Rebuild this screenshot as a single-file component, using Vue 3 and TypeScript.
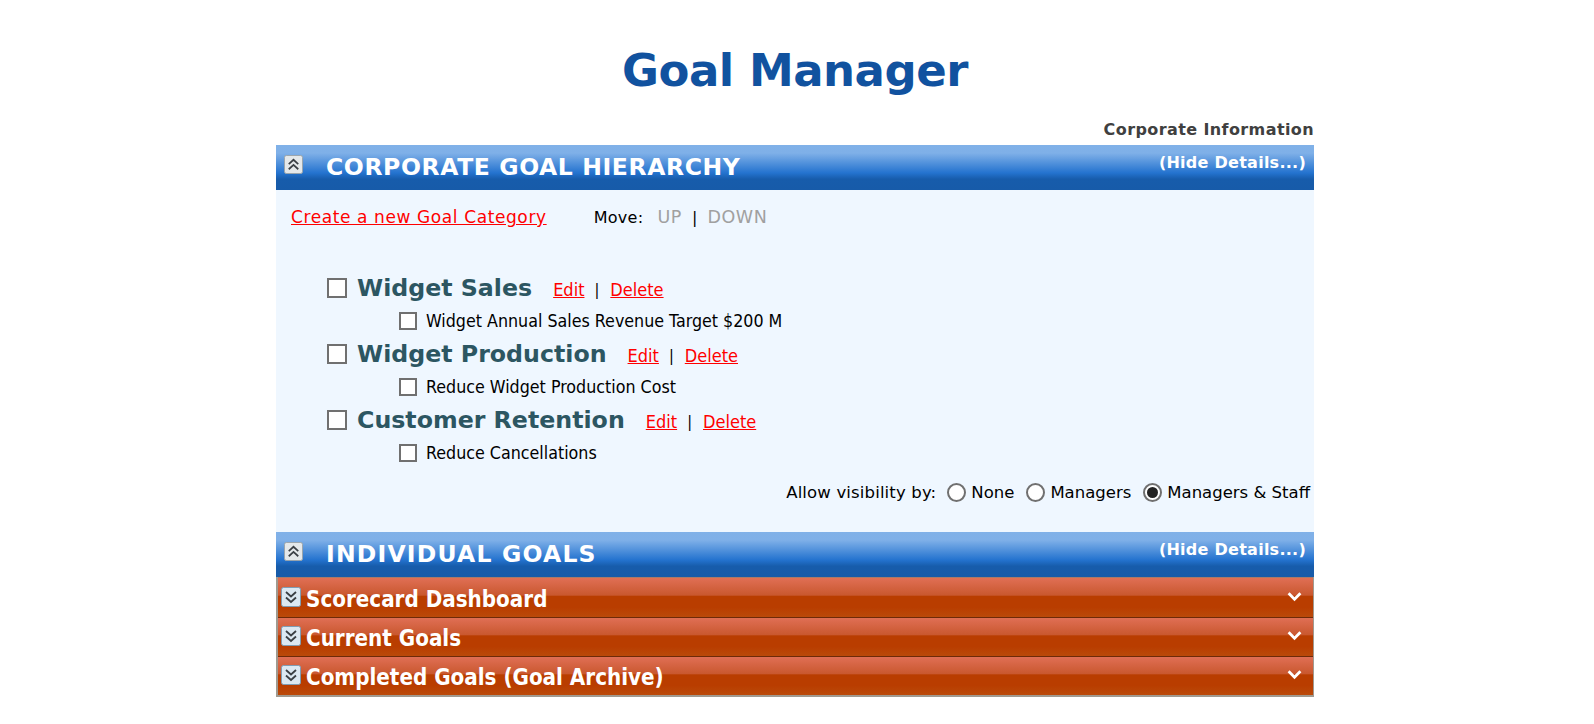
<script setup lang="ts">
interface Goal { name: string; sub: string; }
const goals: Goal[] = [
  { name: 'Widget Sales', sub: 'Widget Annual Sales Revenue Target $200 M' },
  { name: 'Widget Production', sub: 'Reduce Widget Production Cost' },
  { name: 'Customer Retention', sub: 'Reduce Cancellations' },
];
const visibility = [
  { label: 'None', on: false },
  { label: 'Managers', on: false },
  { label: 'Managers & Staff', on: true },
];
const rows = ['Scorecard Dashboard', 'Current Goals', 'Completed Goals (Goal Archive)'];
</script>

<template>
  <div class="page">
    <h1 class="title">Goal Manager</h1>
    <div class="corp">Corporate Information</div>

    <div class="band">
      <svg class="tog" viewBox="0 0 20 20"><rect x="0.5" y="0.5" width="19" height="19" rx="2" fill="#e4e8ea" stroke="#9aa3aa"/><path d="M5 9.5 10 5l5 4.5M5 15l5-4.5 5 4.5" fill="none" stroke="#3a3f44" stroke-width="1.8"/></svg>
      <span class="band-title">CORPORATE GOAL HIERARCHY</span>
      <a class="hide">(Hide Details...)</a>
    </div>

    <div class="panel">
      <div class="toolbar">
        <a class="link create">Create a new Goal Category</a>
        <span class="move">Move:</span>
        <span class="off">UP</span>
        <span class="sep">|</span>
        <span class="off">DOWN</span>
      </div>

      <div class="tree">
        <div v-for="g in goals" :key="g.name" class="goal">
          <div class="goal-row">
            <span class="box big"></span>
            <span class="goal-name">{{ g.name }}</span>
            <a class="link small first">Edit</a>
            <span class="sep small">|</span>
            <a class="link small">Delete</a>
          </div>
          <div class="sub-row">
            <span class="box"></span>
            <span>{{ g.sub }}</span>
          </div>
        </div>
      </div>

      <div class="vis">
        <span class="vis-label">Allow visibility by:</span>
        <span v-for="v in visibility" :key="v.label" class="opt">
          <span class="radio" :class="{ on: v.on }"></span>{{ v.label }}
        </span>
      </div>
    </div>

    <div class="band">
      <svg class="tog" viewBox="0 0 20 20"><rect x="0.5" y="0.5" width="19" height="19" rx="2" fill="#e4e8ea" stroke="#9aa3aa"/><path d="M5 9.5 10 5l5 4.5M5 15l5-4.5 5 4.5" fill="none" stroke="#3a3f44" stroke-width="1.8"/></svg>
      <span class="band-title wide">INDIVIDUAL GOALS</span>
      <a class="hide">(Hide Details...)</a>
    </div>

    <div class="stack">
      <div v-for="r in rows" :key="r" class="row">
        <svg class="tog-r" viewBox="0 0 20 20"><rect x="0.5" y="0.5" width="19" height="19" rx="2" fill="#dce8f2" stroke="#7f9db5"/><path d="M5 5l5 4.5L15 5M5 10.5l5 4.5 5-4.5" fill="none" stroke="#3a3f44" stroke-width="1.8"/></svg>
        <span class="row-title">{{ r }}</span>
        <svg class="chev" viewBox="0 0 14 10"><path d="M1.5 2 7 7.5 12.5 2" fill="none" stroke="#fff" stroke-width="2.6"/></svg>
      </div>
    </div>
  </div>
</template>

<style scoped>
.page {
  width: 1038px;
  margin: 0 auto;
  padding-right: 4px;
  font-family: "DejaVu Sans", Verdana, sans-serif;
  color: #000;
}
.title {
  margin: 0;
  padding-top: 40px;
  height: 75px;
  line-height: 62px;
  font-size: 45px;
  letter-spacing: -0.5px;
  font-weight: 700;
  text-align: center;
  color: #11529f;
  box-sizing: content-box;
}
.corp {
  height: 30px;
  line-height: 29px;
  text-align: right;
  font-size: 16px;
  letter-spacing: 0.4px;
  font-weight: 700;
  color: #404040;
}
.band {
  height: 45px;
  display: flex;
  align-items: flex-start;
  background: linear-gradient(#80b1e8 0, #7fb0e8 18%, #2473cf 62%, #175cab 76%, #175ba9 100%);
  color: #fff;
}
.tog { width: 19px; height: 19px; margin: 10px 0 0 8px; flex: none; }
.band-title {
  margin-left: 23px;
  margin-top: 7px;
  line-height: 30px;
  font-size: 23.5px;
  letter-spacing: 0.6px;
  font-weight: 700;
}
.band-title.wide { letter-spacing: 1.2px; }
.hide {
  margin-left: auto;
  margin-right: 8px;
  margin-top: 7px;
  line-height: 22px;
  font-size: 16px;
  letter-spacing: 0.26px;
  font-weight: 700;
}
.panel {
  height: 342px;
  background: #eff7ff;
  box-sizing: border-box;
  padding: 16px 4px 0 15px;
  display: flex;
  flex-direction: column;
  font-size: 16px;
}
.toolbar { display: flex; align-items: center; height: 22px; color: #000; }
.link { color: #f00; text-decoration: underline; }
.create { font-size: 17px; letter-spacing: 0.6px; }
.move { margin-left: 47px; margin-right: 14px; letter-spacing: 0.3px; }
.off { color: #a0a0a0; font-size: 17.5px; letter-spacing: 0.6px; }
.sep { margin: 0 10px; }
.tree { margin-top: 42px; padding-left: 36px; font-family: "DejaVu Sans Condensed", "DejaVu Sans", sans-serif; }
.goal-row { display: flex; align-items: center; height: 35px; }
.sub-row { display: flex; align-items: center; height: 31px; padding-left: 72px; font-size: 17.7px; }
.box { width: 14px; height: 14px; border: 2px solid #707070; background: #fff; margin-right: 9px; flex: none; }
.box.big { width: 16px; height: 16px; margin-right: 10px; }
.goal-name {
  font-family: "DejaVu Sans", sans-serif;
  font-size: 23.7px;
  font-weight: 700;
  color: #2c5662;
}
.small { font-size: 18px; font-family: "DejaVu Sans Condensed", "DejaVu Sans", sans-serif; margin-top: 3px; }
.first { margin-left: 21px; }
.sep.small { margin: 3px 11px 0 10px; font-size: 16px; }
.vis {
  display: flex;
  justify-content: flex-end;
  align-items: center;
  margin-top: 12px;
  height: 24px;
  font-size: 16.5px;
}
.vis-label { margin-right: 11px; letter-spacing: 0.15px; }
.opt { display: inline-flex; align-items: center; margin-right: 12px; }
.opt:last-child { margin-right: 0; }
.radio {
  width: 15px;
  height: 15px;
  border: 2px solid #707070;
  border-radius: 50%;
  background: #fff;
  margin-right: 5px;
  position: relative;
}
.radio.on::after {
  content: "";
  position: absolute;
  inset: 2px;
  border-radius: 50%;
  background: #222;
}
.stack { border-left: 2px solid #a09a90; border-right: 1px solid #a09a90; border-bottom: 2px solid #a09a90; }
.row {
  height: 39px;
  display: flex;
  align-items: flex-start;
  background: linear-gradient(#e06f55 0, #c9582f 44%, #b93d00 47%, #b93d00 75%, #ba4a0a 100%);
  border-top: 1px solid #a87a68;
  color: #fff;
  box-sizing: border-box;
}
.row:first-child { height: 40px; }
.row + .row { border-top: 1px solid #6e2a08; }
.tog-r { width: 20px; height: 20px; margin: 8px 0 0 3px; flex: none; }
.row:first-child .tog-r { margin-top: 9px; }
.row-title {
  margin-left: 5px;
  margin-top: 3px;
  line-height: 34px;
  font-family: "DejaVu Sans Condensed", "DejaVu Sans", sans-serif;
  font-size: 22.2px;
  font-weight: 700;
}
.row:first-child .row-title { margin-top: 4px; }
.chev { width: 15px; height: 11px; margin: 12px 11px 0 auto; }
.row:first-child .chev { margin-top: 13px; }
</style>

<style>
html, body { background: #fff; }
</style>
